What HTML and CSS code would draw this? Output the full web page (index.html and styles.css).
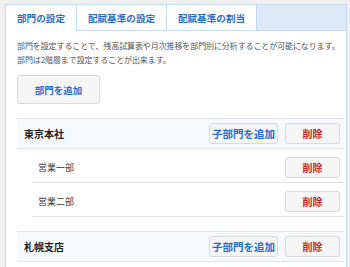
FILE: index.html
```html
<!DOCTYPE html>
<html lang="ja">
<head>
  <meta charset="UTF-8" />
  <title>部門の設定</title>
  <link rel="stylesheet" href="styles.css">
</head>
<body>
  <div class="panel">
    <div class="tabs">
      <a class="tab tab-first active">部門の設定</a>
      <a class="tab">配賦基準の設定</a>
      <a class="tab">配賦基準の割当</a>
    </div>

    <div class="content">
      <p class="desc">部門を設定することで、残高試算表や月次推移を部門別に分析することが可能になります。<br>部門は2階層まで設定することが出来ます。</p>

      <button class="btn btn-add">部門を追加</button>

      <!-- 部門ツリー -->
      <div class="dept">
        <div class="row parent">
          <span class="name">東京本社</span>
          <div class="actions">
            <button class="btn btn-sub">子部門を追加</button>
            <button class="btn btn-del">削除</button>
          </div>
        </div>
        <div class="row child">
          <span class="name">営業一部</span>
          <div class="actions">
            <button class="btn btn-del">削除</button>
          </div>
        </div>
        <div class="row child">
          <span class="name">営業二部</span>
          <div class="actions">
            <button class="btn btn-del">削除</button>
          </div>
        </div>
      </div>

      <div class="dept">
        <div class="row parent">
          <span class="name">札幌支店</span>
          <div class="actions">
            <button class="btn btn-sub">子部門を追加</button>
            <button class="btn btn-del">削除</button>
          </div>
        </div>
      </div>
    </div>
  </div>
</body>
</html>
```

FILE: styles.css
```css
* {
  margin: 0;
  padding: 0;
  box-sizing: border-box;
  font-family: "Noto Sans CJK JP", "Noto Sans", sans-serif;
}

html, body {
  height: 100%;
}

body {
  background: #efefef;
  padding: 4px 3px 0 5px;
  overflow: hidden;
}

.panel {
  height: 100%;
  background: #fff;
  border: 1px solid #c6daf0;
  border-bottom: none;
}

/* タブ */
.tabs {
  display: flex;
  background: #dde9f7;
  border-bottom: 1px solid #c6daf0;
  height: 26px;
}

.tab {
  display: flex;
  align-items: center;
  justify-content: center;
  width: 90px;
  height: 25px;
  background: #fff;
  border-right: 1px solid #c6daf0;
  color: #2a6fc2;
  font-size: 9.6px;
  font-weight: 600;
  white-space: nowrap;
}

.tab-first {
  width: 71px;
  border-top-left-radius: 3px;
}

.tab.active {
  height: 26px;
}

/* 本文 */
.content {
  padding: 8px 2px 0 11px;
}

.desc {
  font-size: 8px;
  line-height: 14px;
  color: #555;
  white-space: nowrap;
  letter-spacing: -0.1px;
}

.btn {
  display: inline-flex;
  align-items: center;
  justify-content: center;
  background: #f5f5f5;
  border: 1px solid #dadada;
  border-radius: 3px;
  font-weight: 600;
  white-space: nowrap;
  cursor: pointer;
}

.btn-add {
  margin-top: 8px;
  width: 83px;
  height: 29px;
  color: #1f6fcd;
  font-size: 9.5px;
}

.btn-sub {
  width: 69px;
  height: 21px;
  color: #1f6fcd;
  font-size: 10.5px;
}

.btn-del {
  width: 55px;
  height: 21px;
  color: #c5272d;
  font-size: 10px;
  font-weight: 700;
}

/* 部門一覧 */
.dept {
  margin-top: 14px;
  border-top: 1px solid #e3e3e3;
}

.row {
  display: flex;
  align-items: center;
  justify-content: space-between;
  border-bottom: 1px solid #e3e3e3;
}

.parent {
  background: #f6f9fd;
  padding: 4px 4px 4px 7px;
}

.parent .name {
  font-size: 10px;
  font-weight: 700;
  color: #222;
}

.child {
  margin-left: 15px;
  padding: 8px 4px 4px 6px;
}

.child .name {
  font-size: 9px;
  color: #333;
}

.actions {
  display: flex;
  gap: 7px;
}
```
